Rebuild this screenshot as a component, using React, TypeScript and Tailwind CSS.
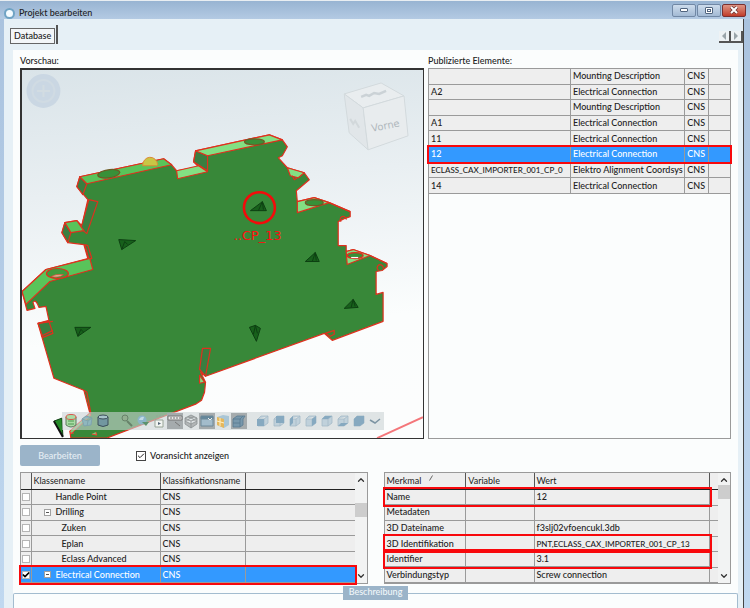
import React, { useState } from "react";
import clsx from "clsx";
import { Check, ChevronDown, ChevronUp } from "lucide-react";

interface Element {
  name: string;
  type: string;
}

interface ClassRow {
  name: string;
  level: 1 | 2;
  expandable?: boolean;
}

interface Property {
  label: string;
  value: string;
  marked?: boolean;
}

const elements: Element[] = [
  { name: "", type: "Mounting Description" },
  { name: "A2", type: "Electrical Connection" },
  { name: "", type: "Mounting Description" },
  { name: "A1", type: "Electrical Connection" },
  { name: "11", type: "Electrical Connection" },
  { name: "12", type: "Electrical Connection" },
  { name: "ECLASS_CAX_IMPORTER_001_CP_0", type: "Elektro Alignment Coordsys" },
  { name: "14", type: "Electrical Connection" },
];

const classes: ClassRow[] = [
  { name: "Handle Point", level: 1 },
  { name: "Drilling", level: 1, expandable: true },
  { name: "Zuken", level: 2 },
  { name: "Eplan", level: 2 },
  { name: "Eclass Advanced", level: 2 },
  { name: "Electrical Connection", level: 1, expandable: true },
];

const properties: Property[] = [
  { label: "Name", value: "12", marked: true },
  { label: "Metadaten", value: "" },
  { label: "3D Dateiname", value: "f3slj02vfoencukl.3db" },
  { label: "3D Identifikation", value: "PNT,ECLASS_CAX_IMPORTER_001_CP_13", marked: true },
  { label: "Identifier", value: "3.1", marked: true },
  { label: "Verbindungstyp", value: "Screw connection" },
];

const cell = "border-r border-b border-[#9a9a9a] px-[2px] py-0 leading-3 whitespace-nowrap";
const headCell =
  "border-r border-b border-r-[#555] border-b-[#222] px-[2px] py-0 leading-3 font-normal text-left whitespace-nowrap";
const markedRow = "outline-2 outline-[#f8080c] relative";
const selectedRow = "bg-[#3399ff] text-white";

// long upper-case identifiers need the smaller size to fit their column
const codeSize = (text: string) => text.length > 25 && "text-[8px]";

function TitleBar() {
  const button =
    "flex h-[13px] w-6 items-center justify-center rounded-[2px] border border-[#7188a5] bg-linear-to-b from-[#cddcec] to-[#a3bad4]";
  return (
    <header className="flex h-[19px] items-center justify-between border-t border-[#e9eef2] bg-linear-to-b from-[#98b4d2] to-[#b3cae3] pl-1">
      <div className="flex items-center gap-1 pt-[6px]">
        <span className="size-[11px] rounded-full border-2 border-[#6fa3c4] bg-[#f4fbff]" />
        <h1 className="leading-3">Projekt bearbeiten</h1>
      </div>
      <div className="flex gap-px pr-1">
        <button className={button} aria-label="Minimieren">
          <span className="h-1 w-2 rounded-[1px] border border-[#50647e] bg-white" />
        </button>
        <button className={button} aria-label="Maximieren">
          <span className="flex h-[7px] w-2 items-center justify-center rounded-[1px] border border-[#50647e] bg-white">
            <span className="h-[3px] w-1 border border-[#50647e]" />
          </span>
        </button>
        <button
          className="flex h-[13px] w-6 items-center justify-center rounded-[2px] border border-[#7a3030] bg-linear-to-b from-[#dd9484] to-[#c03a28]"
          aria-label="Schließen"
        >
          <svg viewBox="0 0 10 8" className="h-2 w-[10px]">
            <path d="M2 1l6 6M8 1L2 7" stroke="#633" strokeWidth="3.4" />
            <path d="M2 1l6 6M8 1L2 7" stroke="#fff" strokeWidth="2" />
          </svg>
        </button>
      </div>
    </header>
  );
}

function TabBar() {
  const arrow = "flex size-3 items-center justify-center border-r-2 border-b-2 border-[#555] bg-[#eef2f4]";
  return (
    <nav className="flex h-[31px] items-start justify-between pt-[6px] pl-[6px]">
      <div className="flex items-end gap-px">
        <button className="h-4 border border-[#666] bg-[#f3f6f8] px-[3px] leading-3">Database</button>
        <span className="h-[19px] w-[2px] bg-[#555]" />
      </div>
      <div className="flex pt-[6px]">
        <button className={arrow} aria-label="Zurück">
          <svg viewBox="0 0 6 8" className="h-2 w-[6px]">
            <path d="M5 0v8L1 4z" fill="#9ba5aa" />
          </svg>
        </button>
        <button className={arrow} aria-label="Weiter">
          <svg viewBox="0 0 6 8" className="h-2 w-[6px]">
            <path d="M1 0v8L5 4z" fill="#9ba5aa" />
          </svg>
        </button>
      </div>
    </nav>
  );
}

function Model() {
  return (
    <svg viewBox="22 70 402 369" className="block h-auto w-full">
      <defs>
        <linearGradient id="sky" x1="0" y1="0" x2="0.1" y2="1">
          <stop offset="0" stopColor="#dae4e9" />
          <stop offset="0.35" stopColor="#e9eff2" />
          <stop offset="0.75" stopColor="#fbfdfd" />
          <stop offset="1" stopColor="#fcfdfd" />
        </linearGradient>
      </defs>
      <rect x="22" y="70" width="402" height="369" fill="url(#sky)" />

      {/* compass */}
      <circle cx="43.500" cy="91" r="17" fill="#cad7e3" />
      <circle cx="43.500" cy="91" r="11" fill="none" stroke="#d0dbe3" strokeWidth="2" />
      <path d="M37 91h13M43.500 85v12" stroke="#d2dce2" strokeWidth="2" />

      {/* view cube */}
      <g stroke="#d3dadd" strokeWidth="1" strokeLinejoin="round">
        <path d="M345 94l37-11 23 13-41 12z" fill="#e9edef" />
        <path d="M345 94l19 14 5 42-19-17z" fill="#e1e6e9" />
        <path d="M364 108l41-12 4 40-40 14z" fill="#e8ecee" />
      </g>
      <path d="M362 97l5-2 3 1 5-3 5 1 7-3" fill="none" stroke="#cbd2d6" strokeWidth="2.500" />
      <path d="M351 119l3 5 2-3 4 7" fill="none" stroke="#d2d8db" strokeWidth="2" />
      <text x="373" y="132" transform="rotate(-11 373 132)" fontSize="10" fill="#b0b8bd" fontFamily="DejaVu Sans, sans-serif">
        Vorne
      </text>

      {/* terminal block */}
      <g stroke="#e0301e" strokeWidth="1.200" strokeLinejoin="round">
        <path
          fill="#388839"
          d="M22 292L46 270 88 259 84 245 68 243 62 233 65 223 77 221 82 226 88 200 77 187 80 177 164 159 172 165 177 171 199 167 194 162 196 151 270 135 283 140 288 147 283 156 279 158 288 168 305 173 310 180 297 191 298 202 315 198 330 203 351 212 351 217 345 219 339 222 339 246 347 246 347 252 354 250 371 256 388 264 388 267 383 271 377 272 377 295 384 293 384 322 333 341 325 334 206 377 201 373 206 383 205 393 202 401 196 405 107 439 71 439 70 432 90 414 84 391 54 379 38 324 49 321 46 307 39 308Q36 299 33 303L35 309 27 311z"
        />
        <path fill="#3a7e40" d="M80 177l7 7-4 11-6-8zM89 200l9 2-11 32-6-5zM65 223l6 10-3 10-6-10zM196 151l12 5v15l-14-9zM38 324l11-2 4 12-10 4zM203 349h8l-5 28-6-7zM85 245l3 1 4 13h-3z" />
        <path fill="#59c45a" d="M80 177l84-18 8 6-85 19zM65 223l12-2 7 10-13 2zM22 292l24-22 44-11 3 11-43 12-24 23z" />
        <path fill="#83e083" d="M177 171l22-5 9 6-30 7zM196 151l74-16 13 5-75 16zM288 168l17 5-6 5-8-2zM298 202l17-4 15 5-32 10zM347 252l7-2 17 6-23 9zM200 376l5 7-5 1z" />
        <path fill="none" d="M38 324l15-2M41 337l12-6M84 391l3 2 4 21M330 203l21 9M371 256l17 8" />
        <path fill="none" d="M342 222a3 3 0 1 1 5-2M380 271a3 3 0 1 1 4-2M293 176l2 4 3-2M326 334l9-3v4l-4 2z" />
        <path fill="#389038" stroke="#6f5a24" d="M98 175a11 4 -8 0 1 22-2a11 4 -8 0 1-22 2zM245 142a10 3 0 0 1 20 0a10 3 0 0 1-20 0zM306 203a9 3 0 0 1 18 0a9 3 0 0 1-18 0z" />
        <ellipse cx="57.500" cy="274" rx="11" ry="5" fill="#409b3d" />
        <path d="M51 277q5-3 13-2-5 4-13 2z" fill="#d9a98d" strokeWidth="0.500" />
        <ellipse cx="356" cy="256" rx="8" ry="3" fill="#389038" />
        <path d="M352 258h7" stroke="#fff" />
      </g>
      <path d="M143 166a7.500 8 0 0 1 15-1l-1 1z" fill="#c9c645" stroke="#dd8a35" />

      {/* connection points */}
      <g fill="#17601b" stroke="#0d3f12" strokeWidth="1" strokeLinejoin="round">
        <path d="M119 240l17 1-14 9zM122 250l3-8 3 3" />
        <path d="M75 328l16 0-13 9zM78 337l3-7 3 3" />
        <path d="M251 211l12-9 4 9zM259 211l4-9 1 8" />
        <path d="M306 262l10-9 4 9zM313 262l3-9 1 8" />
        <path d="M345 309l9-9 5 8zM352 308l2-8 2 7" />
        <path d="M250 328l6-2 5 3-4 13zM254 335l2-9 2 8" />
        <path d="M54 422l8-3 1 18z" fill="#258b28" />
        <path d="M54 422l9 16" stroke="#111" strokeWidth="2" />
      </g>

      <path d="M70 432l20-18 1 2-20 19zM92 435l5 1-1-3M70 434h4" fill="#79cc76" stroke="#f04334" />
      <path d="M378 439l46-21" stroke="#f4767a" strokeWidth="2" />
      <circle cx="260" cy="208" r="15.500" fill="none" stroke="#f30b0b" strokeWidth="2.600" />
      <text x="234" y="240" fontSize="13" fill="#ff1010" fontFamily="DejaVu Sans, sans-serif">
        ..CP_13
      </text>
    </svg>
  );
}

const cubeFaces = [
  { label: "Vorne", d: "M2 6h7v7H2z" },
  { label: "Hinten", d: "M5 3h8v7H5z" },
  { label: "Links", d: "M3 6l3-3v7l-3 3z" },
  { label: "Rechts", d: "M9 6l4-3v7l-4 3z" },
  { label: "Oben", d: "M3 6l3-3h7L9 6z" },
  { label: "Unten", d: "M3 13l3-3h7l-4 3z" },
  { label: "Isometrisch", d: "M3 6l3-3h7v7l-4 3H3z" },
];

const viewTools = [
  {
    label: "Datenbank",
    icon: (
      <g fill="#a9dca5" stroke="#5c7a5f">
        <path d="M3 4v8q5 4 10 0V4" />
        <ellipse cx="8" cy="4" rx="5" ry="2.500" stroke="#d8564a" />
        <path d="M5 8h6M5 11h6" stroke="#4f9a52" />
      </g>
    ),
  },
  {
    label: "Ansicht",
    icon: <path d="M3 6l4-3 6 2-1 7-7 1zM3 6l6 2 4-3M9 8l-1 5" fill="#8fb7be" stroke="#7fa3ae" />,
  },
  {
    label: "Zylinder",
    icon: (
      <g fill="#7297a0" stroke="#3c4f5a">
        <path d="M3 4v8q5 3 10 0V4" />
        <ellipse cx="8" cy="4" rx="5" ry="2" fill="#a8c4cb" />
      </g>
    ),
  },
];

const modeTools = [
  {
    label: "Lupe",
    icon: (
      <g fill="none" stroke="#67826a">
        <circle cx="6" cy="5" r="3" fill="#93af91" />
        <path d="M8 8l5 5" strokeWidth="2" />
      </g>
    ),
  },
  {
    label: "Drehen",
    icon: (
      <g>
        <circle cx="7" cy="7" r="4.500" fill="#8bb5c8" />
        <path d="M4 7a4 4 0 0 1 5-3l-1 3z" fill="#c4dbe6" />
        <path d="M7 9h7l-3 4z" fill="#5c926d" />
      </g>
    ),
  },
  {
    label: "Auswahl",
    icon: (
      <g fill="#f2f5f2" stroke="#98a497">
        <path d="M4 7h8v7H4z" />
        <path d="M5 3h8" strokeDasharray="2 1" />
        <path d="M7 9v3l3-1.500z" fill="#567" stroke="none" />
      </g>
    ),
  },
  {
    label: "Messen",
    pressed: true,
    icon: (
      <g stroke="#777">
        <path d="M1 3h14v4H1z" fill="#e7e7e7" />
        <path d="M4 4v2M7 4v2M10 4v2M13 4v2M8 9l5 4" />
      </g>
    ),
  },
  {
    label: "Gitter",
    icon: (
      <path
        d="M2 5l6-3 6 3v6l-6 4-6-4zM2 5l6 3 6-3M8 8v7M5 3.500l6 3M11 3.500l-6 3M2 8l6 3 6-3"
        fill="#b2b6b7"
        stroke="#8a9092"
        strokeWidth="0.800"
      />
    ),
  },
  {
    label: "Fenster",
    pressed: true,
    icon: (
      <g stroke="#6d8898">
        <path d="M2 4h12v9H2z" fill="#a3bccb" />
        <path d="M2 3h12v3H2z" fill="#63879b" />
        <path d="M9 5l2 2 2-2" fill="none" stroke="#eee" />
      </g>
    ),
  },
  {
    label: "Schnitt",
    icon: (
      <g>
        <path d="M2 4l6-2 6 1v9l-5 3-7-3z" fill="#a9c6d6" />
        <path d="M2 4l7 2v9l-7-3z" fill="#e6b75b" />
        <path d="M5 5v8M2 8l7 2" stroke="#fff1c6" />
      </g>
    ),
  },
  {
    label: "Schattierung",
    pressed: true,
    icon: <path d="M2 6l4-3h8l-2 3v6l-3 2H2zM2 6h8M9 14V6l3-3M2 10h7" fill="#7898ac" stroke="#587a90" strokeWidth="0.800" />,
  },
];

function ToolButton({ label, pressed, children }: { label: string; pressed?: boolean; children: React.ReactNode }) {
  return (
    <button aria-label={label} aria-pressed={pressed} className={clsx("size-4", pressed && "bg-[#a5abad]")}>
      <svg viewBox="0 0 16 16" className="size-4">
        {children}
      </svg>
    </button>
  );
}

function ViewerToolbar() {
  return (
    <div className="absolute bottom-2 left-[10%] flex h-[18px] items-center gap-2 bg-[#ccd3d6]/60 px-px">
      <div className="flex">
        {viewTools.map((tool) => (
          <ToolButton key={tool.label} label={tool.label}>
            {tool.icon}
          </ToolButton>
        ))}
      </div>
      <div className="flex">
        {modeTools.map((tool) => (
          <ToolButton key={tool.label} label={tool.label} pressed={tool.pressed}>
            {tool.icon}
          </ToolButton>
        ))}
      </div>
      <div className="flex">
        {cubeFaces.map((face) => (
          <ToolButton key={face.label} label={face.label}>
            <path d="M3 6l3-3h7v7l-4 3H3zM3 6h6l4-3M9 6v7" fill="#c0d1db" stroke="#a4bac8" strokeWidth="0.800" />
            <path d={face.d} fill="#86a9c0" />
          </ToolButton>
        ))}
        <ToolButton label="Mehr">
          <path d="M3 7l5 3 5-4" fill="none" stroke="#7d94a3" strokeWidth="1.500" />
        </ToolButton>
      </div>
    </div>
  );
}

function ElementList() {
  const [selected, setSelected] = useState(5);
  return (
    <div className="h-full border border-[#9a9a9a]">
      <table aria-labelledby="elements" className="h-[125px] w-full table-fixed border-collapse bg-[#eeeeee]">
        <colgroup>
          <col className="w-[47%]" />
          <col className="w-[38%]" />
          <col className="w-6" />
          <col />
        </colgroup>
        <tbody>
          {elements.map((element, index) => (
            <tr
              key={index}
              onClick={() => setSelected(index)}
              className={clsx(index === selected && [selectedRow, markedRow])}
            >
              <td className={clsx(cell, codeSize(element.name))}>{element.name}</td>
              <td className={cell}>{element.type}</td>
              <td className={cell}>CNS</td>
              <td className="border-b border-[#9a9a9a] p-0" />
            </tr>
          ))}
        </tbody>
      </table>
    </div>
  );
}

function ScrollBar({ thumb }: { thumb: "top" | "upper" }) {
  return (
    <div className="flex w-3 flex-col items-center bg-[#f2f3f3] py-[2px] text-[#333]">
      <ChevronUp size={10} strokeWidth={3} />
      <div className="flex w-full grow flex-col">
        <span className={clsx("h-[14px] w-full bg-[#cdcdcd]", thumb === "upper" && "mt-[18px]")} />
      </div>
      <ChevronDown size={10} strokeWidth={3} />
    </div>
  );
}

function ClassTable() {
  const [checked, setChecked] = useState<string[]>(["Electrical Connection"]);

  const toggle = (name: string) => {
    setChecked((prev) => (prev.includes(name) ? prev.filter((n) => n !== name) : [...prev, name]));
  };

  return (
    <div className="flex border border-[#9a9a9a]">
      <table className="h-[110px] w-0 grow table-fixed border-collapse bg-[#eeeeee]">
        <colgroup>
          <col className="w-[10px]" />
          <col className="w-[129px]" />
          <col className="w-[85px]" />
          <col />
        </colgroup>
        <thead>
          <tr className="h-4">
            <th className={headCell} />
            <th className={headCell}>Klassenname</th>
            <th className={headCell}>Klassifikationsname</th>
            <th className="border-b border-[#222] p-0" />
          </tr>
        </thead>
        <tbody>
          {classes.map((row) => {
            const isChecked = checked.includes(row.name);
            return (
              <tr key={row.name} className={clsx("h-[15px]", isChecked && [selectedRow, markedRow])}>
                <td className="border-r border-b border-[#9a9a9a] p-0">
                  <label className="relative flex items-center justify-center">
                    <input
                      type="checkbox"
                      aria-label={row.name}
                      checked={isChecked}
                      onChange={() => toggle(row.name)}
                      className="size-2 appearance-none border border-[#b5b5b5] bg-white"
                    />
                    {isChecked && <Check size={8} strokeWidth={5} className="absolute text-black" />}
                  </label>
                </td>
                <td className={cell}>
                  <span className={clsx("flex items-center", row.level === 1 ? "pl-[10px]" : "pl-7")}>
                    {row.level === 1 && (
                      <span className="flex w-3">
                        {row.expandable && (
                          <button
                            aria-label="Zuklappen"
                            className="flex size-[7px] items-center justify-center border border-[#a0a0a0] bg-white"
                          >
                            <span className="h-px w-[3px] bg-[#555]" />
                          </button>
                        )}
                      </span>
                    )}
                    {row.name}
                  </span>
                </td>
                <td className={cell}>CNS</td>
                <td className="border-b border-[#9a9a9a] p-0" />
              </tr>
            );
          })}
        </tbody>
      </table>
      <ScrollBar thumb="upper" />
    </div>
  );
}

function PropertyTable() {
  return (
    <div className="flex border border-[#9a9a9a]">
      <table className="h-[110px] w-0 grow table-fixed border-collapse bg-[#eeeeee]">
        <colgroup>
          <col className="w-[25%]" />
          <col className="w-[21%]" />
          <col />
        </colgroup>
        <thead>
          <tr className="h-4">
            <th className={headCell}>
              <span className="flex items-start gap-2">
                Merkmal
                <svg viewBox="0 0 4 6" className="h-[6px] w-1">
                  <path d="M.5 5.500L3.500 .5" stroke="#666" />
                </svg>
              </span>
            </th>
            <th className={headCell}>Variable</th>
            <th className={headCell}>Wert</th>
          </tr>
        </thead>
        <tbody>
          {properties.map((property) => (
            <tr key={property.label} className={clsx("h-[15px]", property.marked && markedRow)}>
              <td className={cell}>{property.label}</td>
              <td className={cell} />
              <td className={clsx(cell, codeSize(property.value))}>{property.value}</td>
            </tr>
          ))}
        </tbody>
      </table>
      <div className="grid w-2 grid-rows-[17px_repeat(6,1fr)] bg-[#eeeeee]">
        <span className="border-b border-[#222]" />
        {properties.map((property) => (
          <span key={property.label} className="border-b border-[#9a9a9a]" />
        ))}
      </div>
      <ScrollBar thumb="top" />
    </div>
  );
}

export default function App() {
  const [preview, setPreview] = useState(true);

  return (
    <div className="flex min-h-screen flex-col bg-linear-to-b from-[#a9c2de] to-[#c0d8f0] font-[Lato,'Open_Sans',sans-serif] text-[9px] leading-3 font-medium text-[#222]">
      <TitleBar />
      <div className="mr-[6px] ml-1 flex grow flex-col border-r border-[#444] bg-[#e6f0f6]">
        <TabBar />
        <main className="mr-[5px] ml-[9px] flex grow flex-col bg-[#fbfdfd]">
          <div className="flex flex-col px-[7px]">
            <div className="grid grid-cols-[4fr_3fr] gap-x-1">
              <h2 className="h-[18px] pt-[5px]">Vorschau:</h2>
              <h2 id="elements" className="h-[18px] pt-[5px]">
                Publizierte Elemente:
              </h2>
              <section className="relative border-t-2 border-r border-b border-l-2 border-[#333]">
                {preview && <Model />}
                <ViewerToolbar />
              </section>
              <ElementList />
            </div>

            <div className="flex h-[33px] items-center gap-9">
              <button className="h-[21px] w-20 rounded-[2px] bg-[#9bb4c9] text-[#e6eef4]">Bearbeiten</button>
              <label className="relative flex items-center gap-1">
                <input
                  type="checkbox"
                  checked={preview}
                  onChange={(e) => setPreview(e.target.checked)}
                  className="size-[10px] appearance-none border border-[#444] bg-white"
                />
                {preview && <Check size={8} strokeWidth={3} className="absolute left-px" />}
                Voransicht anzeigen
              </label>
            </div>

            <div className="grid grid-cols-2 gap-4">
              <ClassTable />
              <PropertyTable />
            </div>
          </div>

          <fieldset className="mt-[2px] grow rounded-t-[2px] border border-b-0 border-[#a3bccf]">
            <legend className="mx-auto h-[14px] bg-[#9bb4c9] px-[6px] text-[#f2f7fa]">Beschreibung</legend>
          </fieldset>
        </main>
      </div>
    </div>
  );
}
